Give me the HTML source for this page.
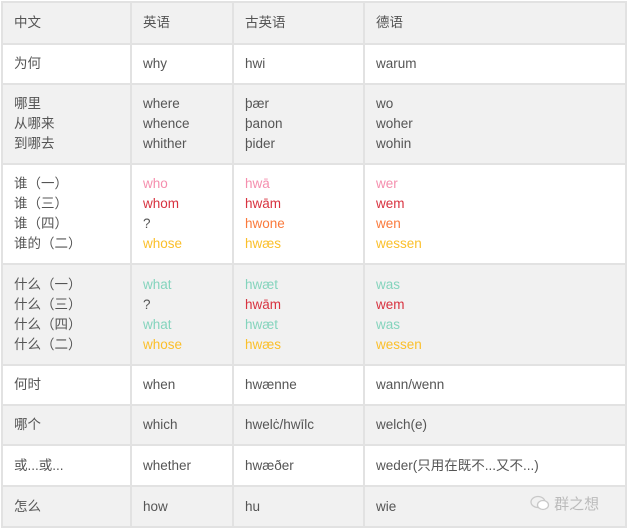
<!DOCTYPE html>
<html><head><meta charset="utf-8"><style>
body{margin:0;background:#fff;width:628px;height:528px;overflow:hidden;font-family:"Liberation Sans","Noto Sans CJK SC",sans-serif;font-size:13.5px;color:#555}
table{position:absolute;left:1px;top:1px;border-collapse:collapse;table-layout:fixed;width:624px}
td{border:2px solid #e2e2e2;padding:0 0 0 11px;vertical-align:middle;line-height:20px}
tr.g td{background:#f1f1f1}
.p{color:#f58fae}.r{color:#d8323f}.o{color:#fa7a3c}.y{color:#fbbf2a}.t{color:#84d4bd}
.wm{position:absolute;left:530px;top:493px;color:#bbb;font-size:15px}
</style></head><body>
<table>
<colgroup><col style="width:129px"><col style="width:102px"><col style="width:131px"><col style="width:262px"></colgroup>
<tr class="g" style="height:42px"><td>中文</td><td>英语</td><td>古英语</td><td>德语</td></tr>
<tr style="height:40px"><td>为何</td><td>why</td><td>hwi</td><td>warum</td></tr>
<tr class="g" style="height:80px"><td>哪里<br>从哪来<br>到哪去</td><td>where<br>whence<br>whither</td><td>þær<br>þanon<br>þider</td><td>wo<br>woher<br>wohin</td></tr>
<tr style="height:100px"><td>谁（一）<br>谁（三）<br>谁（四）<br>谁的（二）</td><td><span class="p">who</span><br><span class="r">whom</span><br>?<br><span class="y">whose</span></td><td><span class="p">hwā</span><br><span class="r">hwām</span><br><span class="o">hwone</span><br><span class="y">hwæs</span></td><td><span class="p">wer</span><br><span class="r">wem</span><br><span class="o">wen</span><br><span class="y">wessen</span></td></tr>
<tr class="g" style="height:101px"><td>什么（一）<br>什么（三）<br>什么（四）<br>什么（二）</td><td><span class="t">what</span><br>?<br><span class="t">what</span><br><span class="y">whose</span></td><td><span class="t">hwæt</span><br><span class="r">hwām</span><br><span class="t">hwæt</span><br><span class="y">hwæs</span></td><td><span class="t">was</span><br><span class="r">wem</span><br><span class="t">was</span><br><span class="y">wessen</span></td></tr>
<tr style="height:40px"><td>何时</td><td>when</td><td>hwænne</td><td>wann/wenn</td></tr>
<tr class="g" style="height:40px"><td>哪个</td><td>which</td><td>hwelċ/hwīlc</td><td>welch(e)</td></tr>
<tr style="height:41px"><td>或...或...</td><td>whether</td><td>hwæðer</td><td>weder(只用在既不...又不...)</td></tr>
<tr class="g" style="height:41px"><td>怎么</td><td>how</td><td>hu</td><td>wie</td></tr>
</table>
<div class="wm"><svg width="20" height="16" viewBox="0 0 20 16" style="vertical-align:-2px"><ellipse cx="8" cy="7" rx="7" ry="5.5" fill="none" stroke="#c8c8c8" stroke-width="1.3"/><ellipse cx="13" cy="10" rx="5.5" ry="4.5" fill="#fff" stroke="#c8c8c8" stroke-width="1.3"/></svg> 群之想</div>
</body></html>
